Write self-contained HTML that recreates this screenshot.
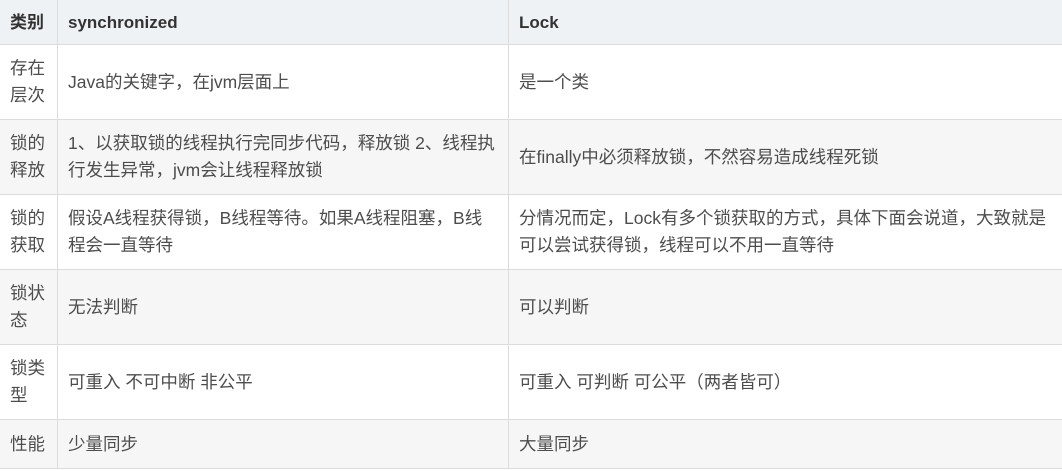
<!DOCTYPE html>
<html><head><meta charset="utf-8"><style>
html,body{margin:0;padding:0;background:#fff;width:1062px;height:471px;overflow:hidden}
table{border-collapse:collapse;font-family:"Liberation Sans","Noto Sans CJK SC",sans-serif;font-size:17.5px;color:#4d4d4d;table-layout:fixed;width:1063px;position:absolute;left:-1px;top:-1px}
td,th{border:1px solid #dcdcdc;padding:0 10px;line-height:27px;text-align:left;vertical-align:middle}
th{background:#eff2f5;height:45px;color:#333;font-weight:bold;box-sizing:border-box;font-size:17px}
tr.r td{height:75px;box-sizing:border-box}
tr.g td{background:#f6f6f6}
tr.last td{height:49px}
</style></head><body>
<table>
<colgroup><col style="width:58px"><col style="width:451px"><col style="width:554px"></colgroup>
<tr><th>类别</th><th>synchronized</th><th>Lock</th></tr>
<tr class="r"><td>存在层次</td><td>Java的关键字，在jvm层面上</td><td>是一个类</td></tr>
<tr class="r g"><td>锁的释放</td><td>1、以获取锁的线程执行完同步代码，释放锁 2、线程执<br>行发生异常，jvm会让线程释放锁</td><td>在finally中必须释放锁，不然容易造成线程死锁</td></tr>
<tr class="r"><td>锁的获取</td><td>假设A线程获得锁，B线程等待。如果A线程阻塞，B线<br>程会一直等待</td><td>分情况而定，Lock有多个锁获取的方式，具体下面会说道，大致就是<br>可以尝试获得锁，线程可以不用一直等待</td></tr>
<tr class="r g"><td>锁状态</td><td>无法判断</td><td>可以判断</td></tr>
<tr class="r"><td>锁类型</td><td>可重入 不可中断 非公平</td><td>可重入 可判断 可公平（两者皆可）</td></tr>
<tr class="r g last"><td>性能</td><td>少量同步</td><td>大量同步</td></tr>
</table>
</body></html>
